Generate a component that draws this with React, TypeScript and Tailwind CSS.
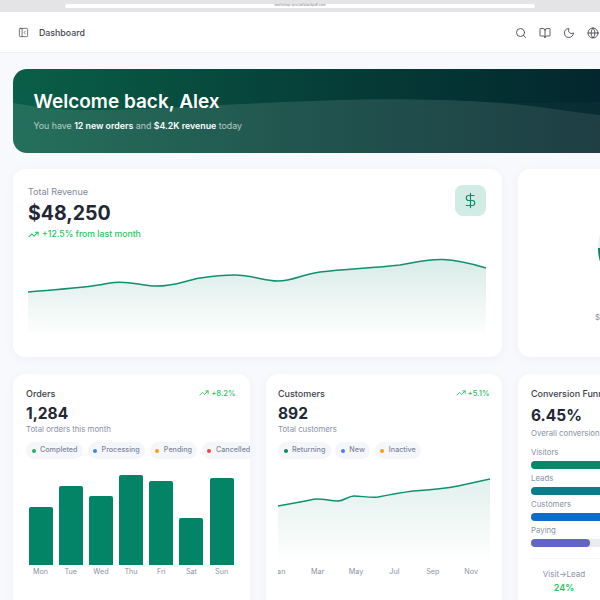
import { BookOpen, DollarSign, Globe, Moon, PanelLeftClose, Search, TrendingUp } from "lucide-react";

const bars = [
  { day: "Mon", h: 58 },
  { day: "Tue", h: 79 },
  { day: "Wed", h: 69 },
  { day: "Thu", h: 90 },
  { day: "Fri", h: 84 },
  { day: "Sat", h: 47 },
  { day: "Sun", h: 87 },
];

const funnel = [
  { label: "Visitors", width: "100%", color: "#0a8668" },
  { label: "Leads", width: "82%", color: "#0a7d8c" },
  { label: "Customers", width: "58%", color: "#0b6cc9" },
  { label: "Paying", width: "28%", color: "#6264c8" },
];

const revenueLine =
  "M0 38 C30 35 60 34 82 29 C98 26 110 31 125 32 C145 33 155 27 172 24 C185 22 195 21 207 21 C225 21 235 27 250 27 C265 27 275 20 292 18 C320 15 345 14 372 11 C390 8 400 5 415 5.5 C430 6 445 10 458 14";
const customerLine =
  "M0 28 L22 24 C30 23 34 21 39 21 C46 21 54 23 60 23 C66 23 70 18 76 18 C84 18 92 20 100 19 C110 17 120 15 135 13 C150 12 165 11 180 8 L212 1";

const Chip = ({ color, label }: { color: string; label: string }) => (
  <div className="flex h-[17px] shrink-0 items-center gap-[4.5px] rounded-full bg-[#f5f6fa] px-[5.5px] text-[7.2px] font-medium text-[#7f879c]">
    <span className="h-[4px] w-[4px] rounded-full" style={{ backgroundColor: color }} />
    {label}
  </div>
);

const Trend = ({ value }: { value: string }) => (
  <div className="flex items-center gap-[2px] text-[7.6px] font-medium text-[#22c55e]">
    <TrendingUp size={10} strokeWidth={2.2} />
    {value}
  </div>
);

export default function App() {
  return (
    <div className="h-[600px] w-[600px] overflow-hidden bg-[#f8f9fd] font-['Inter',sans-serif]">
      <div className="w-[1040px]">
        {/* browser strip */}
        <div className="flex h-[12px] w-[600px] items-center bg-[#e4e4e7] pl-[65px]">
          <div className="flex h-[4.5px] w-[470px] items-center justify-center rounded-full bg-white">
            <span className="text-[3.5px] leading-none text-[#777]">workshop-pro.tailstackpdf.com</span>
          </div>
        </div>

        {/* top bar */}
        <header className="flex h-[41px] w-[600px] items-center border-b border-[#eff0f5] bg-white pl-[18px] pt-[1px] text-[#44464f]">
          <PanelLeftClose size={11} strokeWidth={1.6} />
          <span className="ml-[10px] text-[8.8px] font-medium">Dashboard</span>
          <div className="ml-auto flex shrink-0 items-center gap-[12px] pr-[1px] text-[#3f4149]">
            <Search size={12} strokeWidth={1.7} />
            <BookOpen size={12} strokeWidth={1.7} />
            <Moon size={12} strokeWidth={1.7} />
            <Globe size={12} strokeWidth={1.7} />
          </div>
        </header>

        <main className="px-[13px] pt-[16px]">
          {/* welcome banner */}
          <section className="relative h-[84px] w-[1000px] overflow-hidden rounded-[14px] bg-[linear-gradient(90deg,#0a5f47_0%,#063f39_30%,#03262d_60%,#021c26_100%)]">
            <svg className="absolute inset-0" width="1000" height="84" viewBox="0 0 1000 84" fill="none">
              <path d="M0 34 C25 38 45 41 70 41 C110 41 150 39 190 37 C230 35 265 33 300 32 C345 30 390 30 430 31 C455 32 480 33 500 35 C530 38 560 43 587 46 L1000 60 V84 H0 Z" fill="#ffffff" fillOpacity="0.11" />
              <path d="M490 34 C525 34 560 33 587 33 L1000 28 V60 L587 46 C560 43 530 38 500 35 Z" fill="#ffffff" fillOpacity="0.025" />
            </svg>
            <div className="relative pl-[20.5px] pt-[20px]">
              <h1 className="text-[19px] font-semibold leading-[26px] text-white">Welcome back, Alex</h1>
              <p className="mt-[5px] text-[8.8px] leading-[12px] text-white/65">
                You have <strong className="font-semibold text-white">12 new orders</strong> and{" "}
                <strong className="font-semibold text-white">$4.2K revenue</strong> today
              </p>
            </div>
          </section>

          {/* first row */}
          <div className="mt-[16px] grid grid-cols-[489px_489px] gap-[16px]">
            <section className="h-[188px] rounded-[12px] bg-white pl-[15px] pr-[16px] pt-[16px] shadow-[0_2px_10px_rgba(60,70,110,0.05)]">
              <div className="flex items-start justify-between">
                <div>
                  <p className="text-[9px] leading-[13px] text-[#7f879c]">Total Revenue</p>
                  <p className="mt-[2px] text-[19.5px] font-bold leading-[26px] text-[#232735]">$48,250</p>
                  <div className="mt-[2px] flex items-center gap-[3px] text-[8.7px] font-medium leading-[12px] text-[#22c55e]">
                    <TrendingUp size={11} strokeWidth={2.2} />
                    +12.5% from last month
                  </div>
                </div>
                <div className="flex h-[31px] w-[31px] items-center justify-center rounded-[8px] bg-[#d0ece4] text-[#0e8a6c]">
                  <DollarSign size={17} strokeWidth={1.6} />
                </div>
              </div>
              <svg className="mt-[14px] block" width="458" height="90" viewBox="0 0 458 90" fill="none">
                <defs>
                  <linearGradient id="revenueFill" x1="0" y1="0" x2="0" y2="1">
                    <stop offset="0%" stopColor="#0a8668" stopOpacity="0.16" />
                    <stop offset="100%" stopColor="#0a8668" stopOpacity="0" />
                  </linearGradient>
                </defs>
                <path d={`${revenueLine} V84 H0 Z`} fill="url(#revenueFill)" />
                <path d={revenueLine} stroke="#0f9070" strokeWidth="1.5" />
              </svg>
            </section>

            {/* donut card, mostly off screen */}
            <section className="h-[188px] rounded-[12px] bg-white pl-[77px] pt-[34px] shadow-[0_2px_10px_rgba(60,70,110,0.05)]">
              <svg className="ml-[3px] block" width="90" height="90" viewBox="0 0 90 90" fill="none">
                <circle cx="45" cy="45" r="39" stroke="#eceef4" strokeWidth="12" />
                <path d="M6 45 A39 39 0 0 0 45 84" stroke="#0a8668" strokeWidth="12" />
              </svg>
              <p className="mt-[18px] text-[8px] leading-[12px] text-[#8a91a5]">$</p>
            </section>
          </div>

          {/* second row */}
          <div className="mt-[17px] grid grid-cols-[236.5px_236.5px_236.5px] gap-[16px]">
            <section className="h-[300px] overflow-hidden rounded-[12px] bg-white pl-[13px] pt-[13px] shadow-[0_2px_10px_rgba(60,70,110,0.05)]">
              <div className="flex items-center justify-between pr-[14px]">
                <h2 className="text-[9px] font-medium leading-[13px] text-[#3b3e49]">Orders</h2>
                <Trend value="+8.2%" />
              </div>
              <p className="mt-[3px] text-[15.5px] font-bold leading-[21px] text-[#232735]">1,284</p>
              <p className="text-[7.8px] leading-[11px] text-[#8a91a5]">Total orders this month</p>
              <div className="mt-[7px] flex gap-[4.5px]">
                <Chip color="#22b35e" label="Completed" />
                <Chip color="#3b82f6" label="Processing" />
                <Chip color="#f59e0b" label="Pending" />
                <Chip color="#ef4444" label="Cancelled" />
              </div>
              <div className="mt-[16px] flex h-[90px] items-end gap-[6.2px] pl-[2.5px]">
                {bars.map((bar) => (
                  <div
                    key={bar.day}
                    className="w-[24px] rounded-t-[2px] bg-[#038467]"
                    style={{ height: bar.h }}
                  />
                ))}
              </div>
              <div className="mt-[1px] flex gap-[6.2px] pl-[2.5px]">
                {bars.map((bar) => (
                  <span key={bar.day} className="w-[24px] text-center text-[7.2px] leading-[12px] text-[#8a91a5]">
                    {bar.day}
                  </span>
                ))}
              </div>
            </section>

            <section className="h-[300px] overflow-hidden rounded-[12px] bg-white pl-[12.5px] pr-[12.5px] pt-[13px] shadow-[0_2px_10px_rgba(60,70,110,0.05)]">
              <div className="flex items-center justify-between">
                <h2 className="text-[9px] font-medium leading-[13px] text-[#3b3e49]">Customers</h2>
                <Trend value="+5.1%" />
              </div>
              <p className="mt-[3px] text-[15.5px] font-bold leading-[21px] text-[#232735]">892</p>
              <p className="text-[7.8px] leading-[11px] text-[#8a91a5]">Total customers</p>
              <div className="mt-[7px] flex gap-[4.5px]">
                <Chip color="#0a8668" label="Returning" />
                <Chip color="#3b82f6" label="New" />
                <Chip color="#f59e0b" label="Inactive" />
              </div>
              <svg className="mt-[19px] block" width="212" height="88" viewBox="0 0 212 88" fill="none">
                <defs>
                  <linearGradient id="customerFill" x1="0" y1="0" x2="0" y2="1">
                    <stop offset="0%" stopColor="#0a8668" stopOpacity="0.12" />
                    <stop offset="100%" stopColor="#0a8668" stopOpacity="0" />
                  </linearGradient>
                </defs>
                <path d={`${customerLine} V84 H0 Z`} fill="url(#customerFill)" />
                <path d={customerLine} stroke="#0f9070" strokeWidth="1.4" />
              </svg>
              <div className="flex w-[212px] overflow-hidden text-center text-[7.2px] leading-[12px] text-[#8a91a5]">
                <div className="-ml-[18px] flex">
                  {["Jan", "Mar", "May", "Jul", "Sep", "Nov"].map((month) => (
                    <span key={month} className="w-[38.4px]">
                      {month}
                    </span>
                  ))}
                </div>
              </div>
            </section>

            <section className="h-[300px] overflow-hidden rounded-[12px] bg-white px-[13px] pt-[13px] shadow-[0_2px_10px_rgba(60,70,110,0.05)]">
              <h2 className="text-[9px] font-medium leading-[13px] text-[#3b3e49]">Conversion Funnel</h2>
              <p className="mt-[5px] text-[15.5px] font-bold leading-[22px] text-[#232735]">6.45%</p>
              <p className="mt-[0.5px] text-[7.8px] leading-[11px] text-[#8a91a5]">Overall conversion rate</p>
              <div className="mt-[8.5px] flex flex-col gap-[4.5px]">
                {funnel.map((step) => (
                  <div key={step.label}>
                    <p className="text-[7.8px] leading-[11px] text-[#8a91a5]">{step.label}</p>
                    <div className="mt-[2.5px] h-[8px] rounded-full bg-[#e9ebf1]">
                      <div className="h-[8px] rounded-full" style={{ width: step.width, backgroundColor: step.color }} />
                    </div>
                  </div>
                ))}
              </div>
              <div className="mt-[11px] border-t border-[#f4f5f8] pt-[9px]">
                <div className="w-[66px] text-center">
                  <p className="text-[8px] leading-[12px] text-[#8a91a5]">Visit→Lead</p>
                  <p className="mt-[1px] text-[9px] font-semibold leading-[13px] text-[#22c55e]">24%</p>
                </div>
              </div>
            </section>
          </div>
        </main>
      </div>
    </div>
  );
}
